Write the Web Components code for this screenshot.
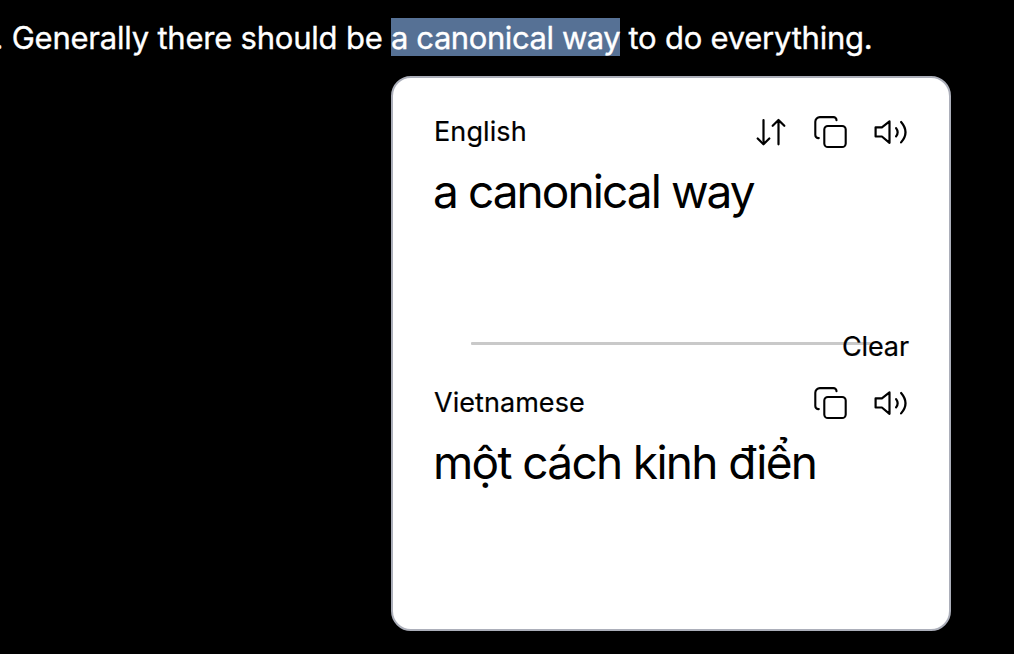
<!DOCTYPE html>
<html lang="en">
<head>
<meta charset="utf-8">
<title>Translate selection</title>
<style>
html,body{margin:0;height:100%;background:#000;overflow:hidden}
body{font-family:Inter,"Liberation Sans",sans-serif}
</style>
</head>
<body>
<translate-page></translate-page>
<script>
const define = (name, html) => customElements.define(name, class extends HTMLElement {
  constructor() {
    super();
    this.attachShadow({ mode: 'open' }).innerHTML = html;
  }
});

define('swap-icon', `
<style>:host{display:block;width:34px;height:36px}svg{display:block}</style>
<svg width="34" height="36" viewBox="0 0 34 36" fill="none" stroke="#000" stroke-width="2.2" stroke-linecap="round" stroke-linejoin="round">
<path d="M8.5 6v24M2.7 24.5l5.8 5.8 5.8-5.8M23.5 30.3v-24M17.7 11.8l5.8-5.8 5.8 5.8"/></svg>`);

define('copy-icon', `
<style>:host{display:block;width:34px;height:36px}svg{display:block}</style>
<svg width="34" height="36" viewBox="0 0 34 36" fill="none" stroke="#000" stroke-width="2.1" stroke-linecap="round" stroke-linejoin="round">
<rect x="10.3" y="12" width="21.4" height="21" rx="3.6"/>
<path d="M22.5 6.3v-.2a3 3 0 0 0-3-3H5.9A4.6 4.6 0 0 0 1.3 7.7v13.2a3.2 3.2 0 0 0 3.2 3.2h.3"/></svg>`);

define('speaker-icon', `
<style>:host{display:block;width:36px;height:36px}svg{display:block}</style>
<svg width="36" height="36" viewBox="0 0 36 36" fill="none" stroke="#000" stroke-width="2.2" stroke-linecap="round" stroke-linejoin="round">
<path d="M2.6 13.3v9.2h6.3l7.6 6.3V7.4l-7.6 5.9zM23.1 14.1q3.1 4.1 0 8.2M28.1 8q8.8 10.2 0 20.4"/></svg>`);

define('source-sentence', `
<style>
:host{display:flex;height:38px;padding-top:18px;white-space:pre;color:#fff;font-size:31px;line-height:39px;-webkit-text-stroke:.35px #fff}
span{display:block;flex:none}
.before{width:391px;display:flex;justify-content:flex-end;letter-spacing:-.22px}
.sel{width:229px;background:#567195;letter-spacing:-.42px}
.after{letter-spacing:-.24px}
</style>
<span class="before">. Generally there should be </span><span class="sel">a canonical way</span><span class="after"> to do everything.</span>`);

define('translation-pane', `
<style>
:host{display:block;color:#000}
header{display:flex;align-items:center;justify-content:space-between;height:36px;margin-right:-1px}
.lang{font-size:27px;line-height:36px;white-space:nowrap;letter-spacing:var(--label-space,0);-webkit-text-stroke:.2px #000}
.actions{display:flex;gap:25px}
.text{font-size:46px;line-height:60px;margin:var(--text-top,12px) 0 0 -1px;white-space:nowrap;letter-spacing:var(--text-space,-1px)}
</style>
<header><div class="lang"><slot name="language"></slot></div><div class="actions"><slot name="actions"></slot></div></header>
<div class="text"><slot></slot></div>`);

define('clear-divider', `
<style>
:host{display:grid;height:40px;align-items:center}
i,b{grid-area:1/1}
i{height:3px;width:400px;background:#c9c9c9;justify-self:center;margin-bottom:5px;border-radius:1px}
b{font-weight:400;font-size:27px;line-height:40px;justify-self:end;z-index:1;letter-spacing:-.1px;margin:2px -1px 0 0;-webkit-text-stroke:.2px #000}
</style><i></i><b><slot></slot></b>`);

define('translate-card', `
<style>
:host{display:flex;flex-direction:column;box-sizing:border-box;width:560px;height:555px;margin:20px 0 0 391px;padding:36px 41px 0;background:#fff;border:2px solid #acafba;border-radius:20px}
</style><slot></slot>`);

define('translate-page', `
<style>
:host{display:block;height:100%}
.source{height:211px;--label-space:.1px;--text-space:-1.93px;--text-top:11px}
.target{margin-top:20px;--label-space:.05px;--text-space:-1.67px;--text-top:11px}
</style>
<source-sentence></source-sentence>
<translate-card>
<translation-pane class="source"><span slot="language">English</span><swap-icon slot="actions"></swap-icon><copy-icon slot="actions"></copy-icon><speaker-icon slot="actions"></speaker-icon>a canonical way</translation-pane>
<clear-divider>Clear</clear-divider>
<translation-pane class="target"><span slot="language">Vietnamese</span><copy-icon slot="actions"></copy-icon><speaker-icon slot="actions"></speaker-icon><span lang="vi">một cách kinh điển</span></translation-pane>
</translate-card>`);
</script>
</body>
</html>
